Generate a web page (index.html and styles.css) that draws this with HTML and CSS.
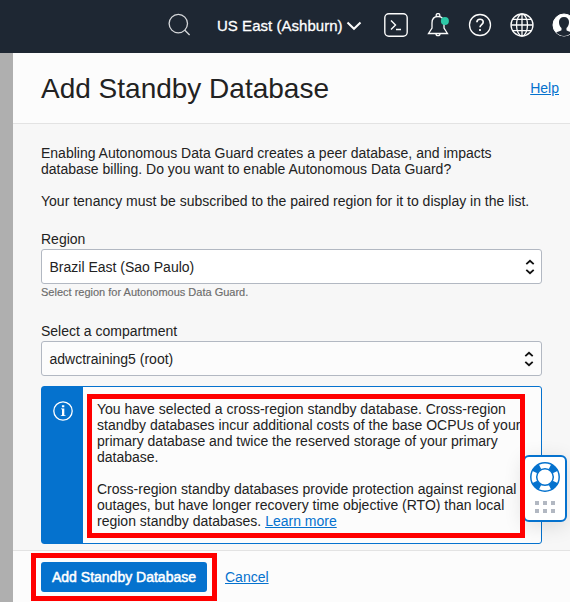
FILE: index.html
```html
<!DOCTYPE html>
<html lang="en">
<head>
<meta charset="utf-8">
<title>Add Standby Database</title>
<link rel="stylesheet" href="styles.css">
</head>
<body>
<div class="app">
  <header class="topbar">
    <svg class="search" width="24" height="24" viewBox="0 0 24 24"><circle cx="10.300" cy="10.600" r="9.200"/><path d="M16.600 17l5 5"/></svg>
    <span class="region-name">US East (Ashburn)</span>
    <svg class="caret" width="16" height="12" viewBox="0 0 16 12"><path d="M1.500 2.500L8 8.800l6.500-6.300"/></svg>
    <svg class="shell" width="24" height="24" viewBox="0 0 24 24"><rect x=".8" y=".8" width="22.400" height="22.400" rx="4"/><path d="M7 7.500l4.500 4.500L7 16.500M12 16.500h5"/></svg>
    <svg class="bell" width="24" height="24" viewBox="0 0 24 24"><path d="M2.500 20.500h19l-3.500-5.500V10c0-4-2-6.500-6-6.500S6 6 6 10v5zM10.200 3.500V2.300a1.500 1.500 0 0 1 3.600 0v1.200M10 20.700a2 2 0 0 0 4 0"/><circle class="dot" cx="18.900" cy="8.100" r="4"/></svg>
    <svg class="question" width="24" height="24" viewBox="0 0 24 24"><circle cx="12" cy="12" r="10.500"/><path class="bold" d="M8.900 9.300c.1-4 6.300-4 6.300-.3 0 2.600-3.200 2.600-3.200 5.300M12 16v2"/></svg>
    <svg class="globe" width="24" height="24" viewBox="0 0 24 24"><circle cx="12" cy="12" r="11"/><ellipse cx="12" cy="12" rx="5.500" ry="11"/><path d="M12 1v22M1 12h22M3 6.300h18M3 17.700h18"/></svg>
    <svg class="user" width="24" height="24" viewBox="0 0 24 24"><circle class="disc" cx="12" cy="12" r="11"/><path class="cut" d="M12 4c-3.200 0-5 2-5 5 0 2.800 1 4.800 2.500 6v2.200c-1 .9-3.200 1.200-5.200 2.300 2 2.200 4.700 3.500 7.700 3.500s5.700-1.300 7.700-3.500c-2-1.100-4.200-1.400-5.200-2.300V15C16 13.800 17 11.800 17 9c0-3-1.800-5-5-5z"/></svg>
  </header>
  <div class="workspace">
    <div class="backdrop"></div>
    <main class="panel">
      <div class="panel-head"><h1>Add Standby Database</h1><a class="link" href="#">Help</a></div>
      <div class="panel-body">
        <p class="intro">Enabling Autonomous Data Guard creates a peer database, and impacts<br>database billing. Do you want to enable Autonomous Data Guard?</p>
        <p class="tenancy">Your tenancy must be subscribed to the paired region for it to display in the list.</p>
        <div class="label">Region</div>
        <div class="select"><span>Brazil East (Sao Paulo)</span><svg width="10" height="16" viewBox="0 0 10 16"><path d="M1.300 5.200L5 1.800l3.700 3.400M1.300 10.800L5 14.200l3.700-3.400"/></svg></div>
        <div class="hint">Select region for Autonomous Data Guard.</div>
        <div class="label">Select a compartment</div>
        <div class="select compartment"><span>adwctraining5 (root)</span><svg width="10" height="16" viewBox="0 0 10 16"><path d="M1.300 5.200L5 1.800l3.700 3.400M1.300 10.800L5 14.200l3.700-3.400"/></svg></div>
        <section class="notice">
          <div class="notice-icon"><svg width="20" height="20" viewBox="0 0 20 20"><circle cx="10" cy="10" r="9.200"/><path class="glyph" d="M8 7.500h3.300v6.700H12.500v.9H7.800v-.9h1.200V8.300H8zM8.900 4.300h2.400v2H8.900z"/></svg></div>
          <div class="notice-text">
            <p>You have selected a cross-region standby database. Cross-region<br>standby databases incur additional costs of the base OCPUs of your<br>primary database and twice the reserved storage of your primary<br>database.</p>
            <p>Cross-region standby databases provide protection against regional<br>outages, but have longer recovery time objective (RTO) than local<br>region standby databases. <a class="link" href="#">Learn more</a></p>
          </div>
          <div class="support">
            <svg width="30" height="30" viewBox="0 0 30 30"><circle class="ring" cx="15" cy="15" r="11.500"/><circle class="pads" cx="15" cy="15" r="11.500" pathLength="360"/><circle class="edge" cx="15" cy="15" r="14.200"/><circle class="edge" cx="15" cy="15" r="8.300"/></svg>
            <div class="grip"><i></i><i></i><i></i><i></i><i></i><i></i></div>
          </div>
          <div class="highlight text-highlight"></div>
        </section>
      </div>
      <footer class="panel-foot">
        <div class="button-wrap"><button class="primary">Add Standby Database</button><div class="highlight button-highlight"></div></div>
        <a class="link cancel" href="#">Cancel</a>
      </footer>
    </main>
  </div>
</div>
</body>
</html>
```
FILE: styles.css
```css
* { box-sizing: border-box; }
body { margin: 0; overflow: hidden; font: 14px/16px "Liberation Sans", Arial, sans-serif; color: #222; }
p, h1 { margin: 0; }
.link { color: #0572ce; text-decoration: underline; }
.app { width: 570px; height: 602px; display: flex; flex-direction: column; overflow: hidden; }
.topbar { height: 53px; flex: none; display: flex; align-items: center; padding: 0 0 3px 168px; background: #1e2733; color: #fff; }
.topbar svg { flex: none; fill: none; stroke: #fcfcfc; stroke-width: 1.3; }
.topbar .search { stroke: #d5d7da; }
.region-name { flex: none; width: 128px; margin: 2px 0 0 25px; white-space: nowrap; font-size: 15px; line-height: 20px; letter-spacing: .03px; -webkit-text-stroke: .3px #fff; }
.topbar .caret { margin: 2px 0 0 1px; stroke-width: 2; }
.topbar .shell { margin-left: 22px; stroke-width: 1.4; }
.topbar .bell { margin-left: 18px; }
.topbar .dot { fill: #2dc7a6; stroke: none; }
.topbar .question { margin-left: 18px; }
.topbar .bold { stroke-width: 1.7; }
.topbar .globe { margin-left: 18px; }
.topbar .user { margin-left: 18px; }
.topbar .disc { fill: #fff; stroke: #fff; stroke-width: 1; }
.topbar .cut { fill: #1e2733; stroke: none; }
.workspace { flex: 1; min-height: 0; display: flex; }
.backdrop { width: 13px; flex: none; background: #afafaf; }
.panel { flex: 1; min-width: 0; display: flex; flex-direction: column; background: #f7f7f7; }
.panel-head { height: 71px; flex: none; display: flex; align-items: center; justify-content: space-between; padding: 0 11px 0 28px; background: #fcfcfc; border-bottom: 1px solid #e3e3e3; }
h1 { margin-top: 2px; font-size: 28px; line-height: 34px; font-weight: 400; white-space: nowrap; }
.panel-body { flex: 1; min-height: 0; padding: 21px 28px 0; white-space: nowrap; }
.intro { margin-bottom: 16px; }
.tenancy { margin-bottom: 22px; }
.label { margin-bottom: 2px; }
.select { height: 35px; display: flex; align-items: center; justify-content: space-between; padding: 1px 6px 0 7.5px; border: 1px solid #b2b8c2; border-radius: 3px; background: #fff; }
.select svg { fill: none; stroke: #111; stroke-width: 1.8; }
.compartment { padding-right: 7px; padding-bottom: 1px; background: #fcfcfc; }
.hint { margin: 2px 0 24px; font-size: 11px; line-height: 13px; color: #6c6c6c; -webkit-text-stroke: .15px #6c6c6c; }
.notice { position: relative; height: 158px; margin-top: 10px; display: flex; border: 1px solid #0572ce; border-radius: 3px; background: #fcfcfc; }
.notice-icon { width: 41px; flex: none; padding: 14px 0 0 11px; background: #0572ce; }
.notice-icon svg { display: block; fill: none; stroke: #fff; stroke-width: 1.3; }
.notice-icon .glyph { fill: #fff; stroke: none; }
.notice-text { padding: 14px 0 0 14px; }
.notice-text p + p { margin-top: 16px; }
.highlight { position: absolute; border: 5px solid #f00; pointer-events: none; }
.text-highlight { left: 45px; top: 7px; width: 438px; height: 144px; }
.support { position: absolute; left: 481px; top: 68px; width: 44px; height: 67px; display: flex; flex-direction: column; align-items: center; padding: 5px 0 0; border: 2px solid #0572ce; border-radius: 6px; background: #fff; box-shadow: 0 4px 20px rgba(0,0,0,.12); }
.support svg { flex: none; fill: none; }
.support .ring { stroke: #fff; stroke-width: 6; }
.support .pads { stroke: #0572ce; stroke-width: 6; stroke-dasharray: 38 52; stroke-dashoffset: -26; }
.support .edge { stroke: #0572ce; stroke-width: 1.5; }
.grip { display: grid; grid-template-columns: repeat(3, 4px); gap: 4px; margin-top: 9px; }
.grip i { width: 4px; height: 4px; background: #b2b8c2; }
.panel-foot { height: 52px; flex: none; display: flex; align-items: center; padding: 1px 28px 0; background: #fcfcfc; border-top: 1px solid #e3e3e3; }
.button-wrap { position: relative; margin-bottom: 1px; }
.primary { display: block; width: 166px; height: 30px; padding: 0; border: 0; border-radius: 3px; background: #0572ce; color: #fff; font: 14px/30px "Liberation Sans", Arial, sans-serif; -webkit-text-stroke: .5px #fff; white-space: nowrap; }
.button-highlight { left: -10px; top: -9px; width: 186px; height: 48px; }
.cancel { margin-left: 18px; }
```
